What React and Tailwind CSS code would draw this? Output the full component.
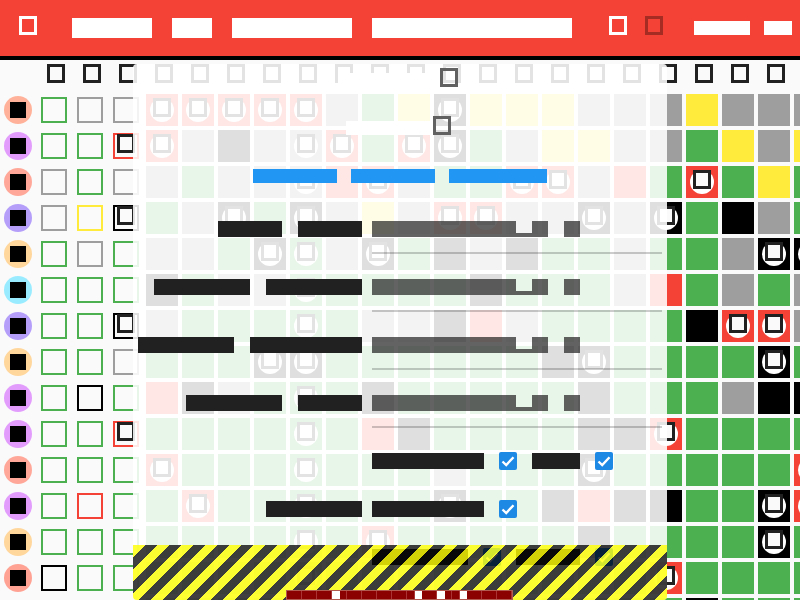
import React from 'react'

// G green, A grey, Y yellow, R red, K black; lowercase = has the round marker
const rows = [
  'GAArrrrrAGYkYYYAAAYAAA',
  'GGrrAKAarGrkGAYYAAGYAY',
  'AGAAGAAaRrAGGrrARGrGYG',
  'AYkGAkGkAYArrAAkAkGKAG',
  'GAGAAGkgAkGKAKGGAGGAkk',
  'GGGKGAAgGGGGKGGGARGAGA',
  'GGkAGGGgGAAKRAGGGGKrrA',
  'GGAGGGkkGGGGGGKkGGGGkG',
  'GKGRKAGgGKGGGGGKGGGAKK',
  'GGrGGGGgGRKGGGGKKrGGGG',
  'GGGrGGGgGGGAGGGkGGGGGr',
  'GRGGrGGgGGGkGGKRKKGGkr',
  'GGGGGGGgGrGGGGGKGGGGkG',
  'KGGGGGGgGGGGGGGGGrGGGG',
  'GGGGGGGGGGGGGGGGGGKGGG',
]

const avatars = [
  'bg-[#ffb299]', 'bg-[#e29cfc]', 'bg-[#ffa899]', 'bg-[#b49efa]', 'bg-[#ffd69c]',
  'bg-[#99ecff]', 'bg-[#b49efa]', 'bg-[#ffd69c]', 'bg-[#e29cfc]', 'bg-[#e29cfc]',
  'bg-[#ffa899]', 'bg-[#e29cfc]', 'bg-[#ffd69c]', 'bg-[#ffa294]', 'bg-[#ffb299]',
]

const fills = {
  G: 'bg-[#4caf50]',
  A: 'bg-[#9e9e9e]',
  Y: 'bg-[#ffeb3b]',
  R: 'bg-[#f44336]',
  K: 'bg-black',
}

const outlines = {
  G: 'border-[#4caf50]',
  A: 'border-[#9e9e9e]',
  Y: 'border-[#ffeb3b]',
  R: 'border-[#f44336]',
  K: 'border-black',
}

const Square = () => (
  <div className="relative w-[18px] h-[19px] border-[3px] border-[#212121] bg-[#fafafa]" />
)

const Cell = ({ code, outlined }) => {
  const key = code.toUpperCase()
  const marked = code !== key

  if (outlined) {
    return (
      <div className="relative w-8 h-8 flex justify-center pt-1">
        <div className={`absolute left-[3px] top-[3px] w-[26px] h-[26px] border-2 ${outlines[key]}`} />
        {marked && <Square />}
      </div>
    )
  }

  return (
    <div className={`relative w-8 h-8 flex justify-center pt-1 ${fills[key]}`}>
      {marked && <div className="absolute left-1 top-1 w-6 h-6 rounded-full bg-white" />}
      {marked && <Square />}
    </div>
  )
}

const Bar = ({ w }) => <div className="h-4 bg-[#212121]" style={{ width: w }} />

const Check = () => (
  <div className="w-[18px] h-[18px] rounded-[2px] bg-[#1e88e5] flex items-center justify-center">
    <svg width="14" height="14" viewBox="0 0 14 14" fill="none">
      <path d="M1.5 7.5 L5.2 11 L12.5 3.2" stroke="white" strokeWidth="2.4" />
    </svg>
  </div>
)

const GrayValue = () => (
  <div className="flex opacity-70 h-4">
    <div className="w-[144px] h-4 bg-[#212121]" />
    <div className="w-4 h-4 border-b-4 border-[#212121]" />
    <div className="w-4 h-4 bg-[#212121]" />
    <div className="w-4 h-4 ml-4 bg-[#212121]" />
  </div>
)

const Row = ({ left, children, className }) => (
  <div className={`flex items-center ${className}`}>
    <div className="w-[229px] flex justify-end gap-4">
      {left.map((w, i) => <Bar key={i} w={w} />)}
    </div>
    <div className="ml-[10px] flex items-center">{children}</div>
  </div>
)

const Rule = ({ className }) => (
  <div className={`ml-[239px] w-[290px] h-[2px] bg-black/20 ${className}`} />
)

const overflowSegments = [
  ['d', 15], ['d', 15], ['d', 15], ['w', 7.5], ['d', 7.5], ['d', 15], ['d', 15], ['d', 15], ['d', 15], ['d', 7.5],
  ['w', 7.5], ['d', 15], ['w', 7.5], ['d', 7.5], ['d', 7.5], ['w', 7.5], ['d', 15], ['d', 15], ['d', 15],
]

const Dialog = () => (
  <div className="absolute left-[133px] top-16 bottom-0 w-[534px] rounded-[4px] overflow-hidden bg-[rgba(255,255,255,0.875)] pt-1">
    <div className="flex justify-center pr-1 h-[19px]">
      <div className="w-[102px] h-4 mt-[5px] bg-white" />
      <div className="w-[18px] h-[19px] border-[3px] border-[#616161]" />
    </div>
    <div className="flex justify-center pr-[3px] h-[19px] mt-[29px]">
      <div className="w-[87px] h-[14px] mt-[5px] bg-white" />
      <div className="w-[18px] h-[19px] border-[3px] border-[#616161]" />
    </div>
    <div className="flex justify-center gap-[14px] mt-[34px]">
      <div className="w-[84px] h-[14px] bg-[#2196f3]" />
      <div className="w-[84px] h-[14px] bg-[#2196f3]" />
      <div className="w-[98px] h-[14px] bg-[#2196f3]" />
    </div>

    <Row left={[64, 64]} className="mt-[38px]"><GrayValue /></Row>
    <Rule className="mt-[15px]" />
    <Row left={[96, 96]} className="mt-[25px]"><GrayValue /></Row>
    <Rule className="mt-[15px]" />
    <Row left={[96, 112]} className="mt-[25px]"><GrayValue /></Row>
    <Rule className="mt-[15px]" />
    <Row left={[96, 64]} className="mt-[25px]"><GrayValue /></Row>
    <Rule className="mt-[15px]" />

    <Row left={[]} className="mt-6">
      <Bar w={112} />
      <div className="ml-[15px]"><Check /></div>
      <div className="ml-[15px]"><Bar w={48} /></div>
      <div className="ml-[15px]"><Check /></div>
    </Row>
    <Row left={[96]} className="mt-[30px]">
      <Bar w={112} />
      <div className="ml-[15px]"><Check /></div>
    </Row>
    <Row left={[]} className="mt-[30px]">
      <Bar w={96} />
      <div className="ml-[15px]"><Check /></div>
      <div className="ml-[15px]"><Bar w={64} /></div>
      <div className="ml-[15px]"><Check /></div>
    </Row>

    <div className="absolute left-0 right-0 bottom-0 h-[55px] bg-[repeating-linear-gradient(-45deg,rgba(255,255,0,0.8)_0_8.5px,rgba(0,0,0,0.75)_8.5px_17px)]">
      <div className="absolute left-[154px] bottom-[1px] flex h-2 ring-1 ring-[#b05a50]">
        {overflowSegments.map(([kind, w], i) => (
          <div
            key={i}
            className={kind === 'd' ? 'bg-[#8b0000] border-r border-[#a33]' : 'bg-white'}
            style={{ width: w }}
          />
        ))}
      </div>
    </div>
  </div>
)

export default function App() {
  return (
    <div className="relative w-[800px] h-[600px] overflow-hidden bg-[#fafafa]">
      <header className="h-[60px] bg-[#f44336] border-b-4 border-black flex items-center">
        <div className="ml-[19px] -mt-[5px] w-[18px] h-[19px] border-[3px] border-white" />
        <div className="ml-[35px] w-20 h-5 bg-white" />
        <div className="ml-5 w-10 h-5 bg-white" />
        <div className="ml-5 w-[120px] h-5 bg-white" />
        <div className="ml-5 w-[200px] h-5 bg-white" />
        <div className="ml-[37px] -mt-[5px] w-[18px] h-[19px] border-[3px] border-white" />
        <div className="ml-[18px] -mt-[5px] w-[18px] h-[19px] border-[3px] border-[#a52c22]" />
        <div className="ml-[31px] w-14 h-[14px] bg-white" />
        <div className="ml-[14px] w-7 h-[14px] bg-white" />
      </header>

      <main className="pl-[2px] w-[900px] grid grid-cols-[repeat(23,32px)] gap-1">
        <div className="h-[30px]" />
        {rows[0].split('').map((_, i) => (
          <div key={i} className="h-[30px] flex justify-center pt-1 pl-1">
            <Square />
          </div>
        ))}
        {rows.map((row, r) => (
          <React.Fragment key={r}>
            <div className="w-8 h-8 flex items-center justify-center">
              <div className={`w-7 h-7 rounded-full flex items-center justify-center ${avatars[r]}`}>
                <div className="w-4 h-4 bg-black" />
              </div>
            </div>
            {row.split('').map((code, c) => (
              <Cell key={c} code={code} outlined={c < 3} />
            ))}
          </React.Fragment>
        ))}
      </main>

      <Dialog />
    </div>
  )
}
